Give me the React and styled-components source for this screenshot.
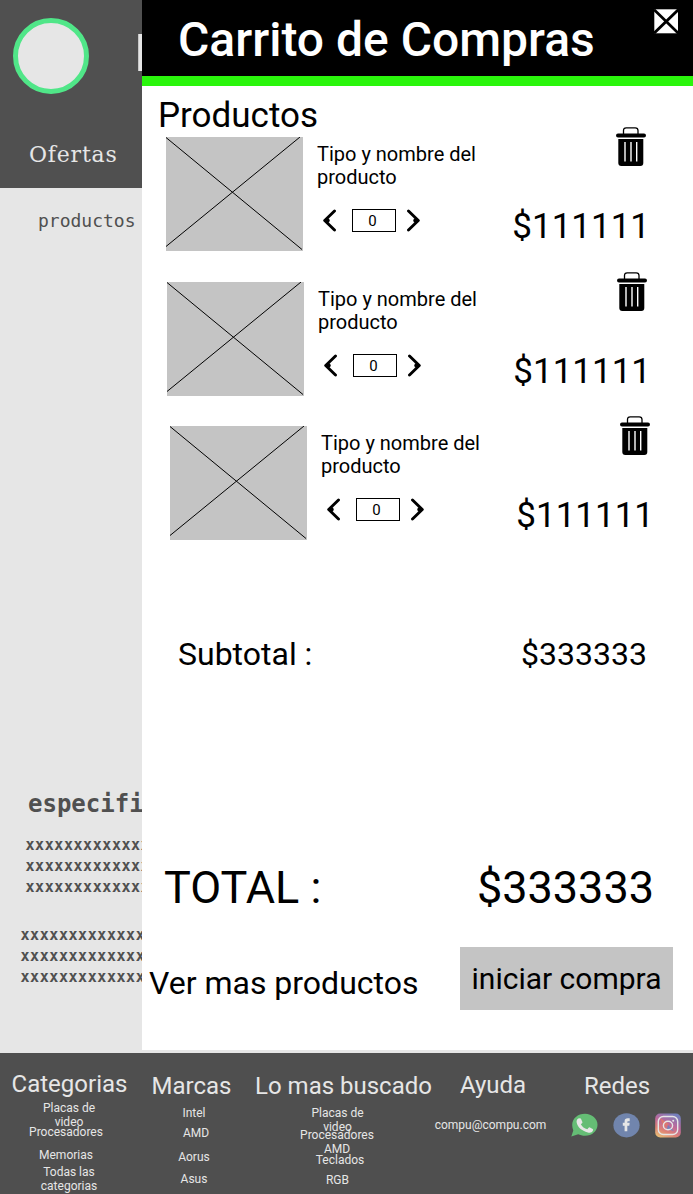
import React from "react";
import styled, { createGlobalStyle } from "styled-components";

const GlobalStyle = createGlobalStyle`
  *, *::before, *::after { box-sizing: border-box; }
  body { margin: 0; background: #e6e6e6; font-family: Roboto, "Liberation Sans", sans-serif; }
  button { font: inherit; color: inherit; border: 0; padding: 0; background: none; cursor: pointer; }
  h1, h2, h3, p { margin: 0; font-weight: 400; }
  svg { display: block; }
`;

const Page = styled.div`
  position: relative;
  width: 693px;
  height: 1194px;
  overflow: hidden;
  display: flex;
  flex-direction: column;
  background: #e6e6e6;
`;

const StoreHeader = styled.header`
  height: 188px;
  flex: none;
  padding: 18px 0 0 12.5px;
  background: #505050;
  color: #e6e6e6;
`;

const Brand = styled.div`
  display: flex;
  gap: 46px;
  height: 120px;
`;

const Logo = styled.div`
  width: 76px;
  height: 76px;
  border: 5px solid #50e688;
  border-radius: 50%;
  background: #e6e6e6;
`;

const StoreName = styled.h1`
  font-size: 51px;
  font-weight: 700;
  line-height: 72px;
`;

const NavLink = styled.a`
  display: block;
  padding: 1px 0 0 16.5px;
  font: 200 22px/32px "DejaVu Serif", serif;
  letter-spacing: 0.8px;
`;

const StoreBody = styled.main`
  flex: 1;
  color: #505050;
  font-family: "DejaVu Sans Mono", monospace;
  white-space: nowrap;
`;

const Crumb = styled.p`
  padding: 21px 0 0 38px;
  font-size: 18px;
  line-height: 24px;
`;

const SpecTitle = styled.h2`
  margin-top: 555px;
  padding-left: 28px;
  font-size: 24px;
  font-weight: 700;
  line-height: 32px;
`;

const SpecText = styled.p`
  margin: ${(p) => p.$top}px 0 0 ${(p) => p.$left}px;
  font-size: 15px;
  font-weight: 700;
  line-height: 21px;
  letter-spacing: 0.57px;
`;

const Footer = styled.footer`
  height: 141px;
  flex: none;
  padding-left: 8px;
  display: grid;
  grid-template-columns: 123px 121px 183px 116px 132px;
  background: #4f4f4f;
  color: #e6e6e6;
  text-align: center;
  white-space: nowrap;
`;

const FooterColumn = styled.section`
  padding-top: ${(p) => p.$top}px;
`;

const FooterTitle = styled.h3`
  font-size: 24px;
  line-height: 28px;
`;

const FooterItem = styled.p`
  margin: ${(p) => p.$gap}px 0 0 ${(p) => p.$shift || 0}px;
  font-size: 12px;
  line-height: 14px;
`;

const Socials = styled.div`
  display: flex;
  gap: 15px;
  margin: 13px 0 0 20px;
`;

const Drawer = styled.aside`
  position: absolute;
  top: 0;
  right: 0;
  width: 551px;
  height: 1050px;
  display: flex;
  flex-direction: column;
  background: #fff;
  color: #000;
  white-space: nowrap;
`;

const DrawerHeader = styled.header`
  height: 86px;
  flex: none;
  display: flex;
  justify-content: space-between;
  padding: 9px 14px 0 36px;
  border-bottom: 10px solid #2af50c;
  background: #000;
  color: #fff;
`;

const DrawerTitle = styled.h2`
  font-size: 48px;
  font-weight: 500;
  line-height: 62px;
`;

const CloseButton = styled.button`
  width: 25px;
  height: 25px;
`;

const SectionTitle = styled.h3`
  height: 51px;
  flex: none;
  padding: 8px 0 0 16px;
  font-size: 35px;
  line-height: 43px;
`;

const CartItem = styled.article`
  height: ${(p) => p.$height}px;
  flex: none;
  display: grid;
  grid-template-columns: 151px 1fr 140px;
  padding-left: ${(p) => p.$inset}px;
  padding-right: ${(p) => p.$right}px;
`;

const Thumb = styled.div`
  width: 137px;
  height: 114px;
  background: #c4c4c4;
`;

const ItemName = styled.p`
  padding-top: 6px;
  font-size: 20px;
  line-height: 23px;
`;

const Stepper = styled.div`
  display: flex;
  align-items: center;
  margin: 20px 0 0 5.5px;
  gap: 10px;
`;

const Quantity = styled.span`
  width: 44px;
  height: 23px;
  margin-left: 5.5px;
  border: 1px solid #000;
  font-size: 15px;
  line-height: 23px;
  text-align: center;
  padding-right: 3px;
`;

const ItemSide = styled.div`
  display: flex;
  flex-direction: column;
  align-items: flex-end;
`;

const RemoveButton = styled.button`
  margin: -10px 4px 0 0;
`;

const Price = styled.span`
  margin-top: 39px;
  font-size: 35px;
  line-height: 42px;
`;

const SumRow = styled.div`
  display: flex;
  justify-content: space-between;
  margin-top: ${(p) => p.$top}px;
  padding: 0 ${(p) => p.$right}px 0 ${(p) => p.$left}px;
  font-size: ${(p) => p.$size}px;
  line-height: ${(p) => p.$line}px;
`;

const Actions = styled.div`
  display: flex;
  justify-content: space-between;
  align-items: center;
  margin-top: 32px;
  padding: 0 20px 0 7px;
`;

const MoreLink = styled.a`
  padding-top: 8px;
  font-size: 32px;
  line-height: 38px;
`;

const CheckoutButton = styled.button`
  && {
    width: 213px;
    height: 63px;
    background: #c4c4c4;
    font-size: 30px;
    line-height: 35px;
  }
`;

function CloseIcon() {
  return (
    <svg width="25" height="25" viewBox="0 0 25 25">
      <path d="M0.3 0.3h23.7v24H0.3z" fill="#fff" />
      <path d="M0 0.6 24.4 24.3M24.4 0.6 0 24.3" stroke="#000" strokeWidth="2.8" />
    </svg>
  );
}

function Placeholder() {
  return (
    <svg width="137" height="114" viewBox="0 0 137 114">
      <path d="M0 .5 136 112.5M0 109.500 134 0" stroke="#000" fill="none" />
    </svg>
  );
}

function TrashIcon() {
  return (
    <svg width="30" height="40" viewBox="0 0 30 40">
      <path d="M7.500 7V3.500Q7.500 .8 10.200 .8H19.200Q22 .8 22 3.500V7" fill="none" stroke="#000" strokeWidth="1.3" />
      <rect x="0" y="6.600" width="30" height="4" rx="2" />
      <path d="M2.300 12H27.300V36Q27.300 39 24.300 39H5.300Q2.300 39 2.300 36Z" />
      <path d="M9 15V34.500M15 15V34.500M20.700 15V34.500" stroke="#fff" strokeWidth="1.4" />
    </svg>
  );
}

function Chevron({ right }) {
  return (
    <svg width="14" height="23" viewBox="0 0 14 23">
      <g transform={right ? "translate(14.5 0) scale(-1 1)" : "translate(-0.5 0)"}>
        <path d="M12 2 2.200 11.500 12 21" fill="none" stroke="#000" strokeWidth="2.900" strokeLinecap="round" strokeLinejoin="round" />
        <circle cx="5" cy="11.500" r="2.200" />
      </g>
    </svg>
  );
}

function WhatsappIcon() {
  return (
    <svg width="27" height="24" viewBox="0 0 27 24">
      <path d="M.3 23.500 2.300 17.500C-1.500 8 5 .7 14 .7c7 0 12.500 5 12.500 11.100S21 22.800 14 22.800c-2.500 0-5-.7-6.800-1.500Z" fill="#65bd75" />
      <path d="M7.200 5.500 9 5.300q.8 0 1.200.9l1.200 2.700q.2.700-.4 1.300l-1.200 1.100c1.500 2.600 3.500 4.100 6.600 4.900l1.200-1.500q.6-.6 1.300-.2l2.800 1.500q.8.500.3 1.500c-1 2-2.800 2.600-5.200 1.900C10.500 17.600 6.900 14.400 5.700 9.700 5.300 8 5.900 6.300 7.200 5.500Z" fill="#e6e6e6" />
    </svg>
  );
}

function FacebookIcon() {
  return (
    <svg width="27" height="25" viewBox="0 0 27 25">
      <ellipse cx="13.500" cy="12.300" rx="13.100" ry="12.100" fill="#7185ad" />
      <path d="M11.600 18.300V12.800H9.800V9.800h1.800V8.300c0-2.200 1.200-3 3.100-3h2v2.900h-1.300c-.8 0-1.100.3-1.100 1v.6h2.400l-.4 3h-2v5.500Z" fill="#e6e6e6" />
    </svg>
  );
}

function InstagramIcon() {
  return (
    <svg width="26" height="25" viewBox="0 0 26 25">
      <defs>
        <linearGradient id="ig" x1="0.200" y1="1" x2="0.700" y2="0">
          <stop offset="0" stopColor="#e8bd76" />
          <stop offset=".28" stopColor="#df8275" />
          <stop offset=".58" stopColor="#bd689b" />
          <stop offset="1" stopColor="#7480bd" />
        </linearGradient>
      </defs>
      <rect x=".2" y=".5" width="25.600" height="24" rx="5" fill="url(#ig)" />
      <path d="M5 5 14 11 9 15Z" fill="#dc766f" />
      <path d="M13 12 19 18 12 16Z" fill="#7480bd" />
      <g fill="none" stroke="#e6e6e6" strokeWidth="1.400">
        <rect x="3.300" y="3.500" width="19.400" height="18" rx="5" />
        <ellipse cx="13" cy="12.500" rx="4.600" ry="4.200" />
      </g>
      <circle cx="18.200" cy="7.800" r="1" fill="#e6e6e6" />
    </svg>
  );
}

const items = [
  { inset: 24, right: 43, height: 145 },
  { inset: 25, right: 42, height: 144 },
  { inset: 28, right: 39, height: 144 },
];

const footerColumns = [
  {
    title: "Categorias",
    top: 17,
    entries: [
      { text: ["Placas de", "video"], gap: 3, shift: -1 },
      { text: ["Procesadores"], gap: -4, shift: -7 },
      { text: ["Memorias"], gap: 9, shift: -7 },
      { text: ["Todas las", "categorias"], gap: 3, shift: -1 },
    ],
  },
  {
    title: "Marcas",
    top: 19,
    entries: [
      { text: ["Intel"], gap: 6, shift: 5 },
      { text: ["AMD"], gap: 6, shift: 9 },
      { text: ["Aorus"], gap: 10, shift: 5 },
      { text: ["Asus"], gap: 8, shift: 5 },
    ],
  },
  {
    title: "Lo mas buscado",
    top: 19,
    entries: [
      { text: ["Placas de", "video"], gap: 6, shift: -12 },
      { text: ["Procesadores"], gap: -6, shift: -13 },
      { text: ["AMD"], gap: 0, shift: -13 },
      { text: ["Teclados"], gap: -3, shift: -7 },
      { text: ["RGB"], gap: 6, shift: -12 },
    ],
  },
  {
    title: "Ayuda",
    top: 18,
    entries: [{ text: ["compu@compu.com"], gap: 19, shift: -5 }],
  },
];

const X = "x".repeat(13);

export default function App() {
  return (
    <>
      <GlobalStyle />
      <Page>
        <StoreHeader>
          <Brand>
            <Logo />
            <StoreName>I</StoreName>
          </Brand>
          <NavLink>Ofertas</NavLink>
        </StoreHeader>
        <StoreBody>
          <Crumb>productos</Crumb>
          <SpecTitle>especifi</SpecTitle>
          <SpecText $top={15} $left={25.5}>{X}<br />{X}<br />{X}</SpecText>
          <SpecText $top={27} $left={20.5}>{X}<br />{X}<br />{X}</SpecText>
        </StoreBody>
        <Footer>
          {footerColumns.map((col) => (
            <FooterColumn key={col.title} $top={col.top}>
              <FooterTitle>{col.title}</FooterTitle>
              {col.entries.map((e) => (
                <FooterItem key={e.text[0]} $gap={e.gap} $shift={e.shift}>
                  {e.text[0]}
                  {e.text[1] && <><br />{e.text[1]}</>}
                </FooterItem>
              ))}
            </FooterColumn>
          ))}
          <FooterColumn $top={19}>
            <FooterTitle>Redes</FooterTitle>
            <Socials>
              <WhatsappIcon />
              <FacebookIcon />
              <InstagramIcon />
            </Socials>
          </FooterColumn>
        </Footer>

        <Drawer>
          <DrawerHeader>
            <DrawerTitle>Carrito de Compras</DrawerTitle>
            <CloseButton aria-label="Cerrar"><CloseIcon /></CloseButton>
          </DrawerHeader>
          <SectionTitle>Productos</SectionTitle>
          {items.map((item) => (
            <CartItem key={item.inset} $inset={item.inset} $right={item.right} $height={item.height}>
              <Thumb><Placeholder /></Thumb>
              <div>
                <ItemName>Tipo y nombre del<br />producto</ItemName>
                <Stepper>
                  <button aria-label="Menos"><Chevron /></button>
                  <Quantity>0</Quantity>
                  <button aria-label="Más"><Chevron right /></button>
                </Stepper>
              </div>
              <ItemSide>
                <RemoveButton aria-label="Eliminar"><TrashIcon /></RemoveButton>
                <Price>$111111</Price>
              </ItemSide>
            </CartItem>
          ))}
          <SumRow $top={65} $left={36} $right={46} $size={32} $line={38}>
            <span>Subtotal :</span>
            <span>$333333</span>
          </SumRow>
          <SumRow $top={188} $left={22} $right={39} $size={45} $line={54}>
            <span>TOTAL :</span>
            <span>$333333</span>
          </SumRow>
          <Actions>
            <MoreLink>Ver mas productos</MoreLink>
            <CheckoutButton>iniciar compra</CheckoutButton>
          </Actions>
        </Drawer>
      </Page>
    </>
  );
}
